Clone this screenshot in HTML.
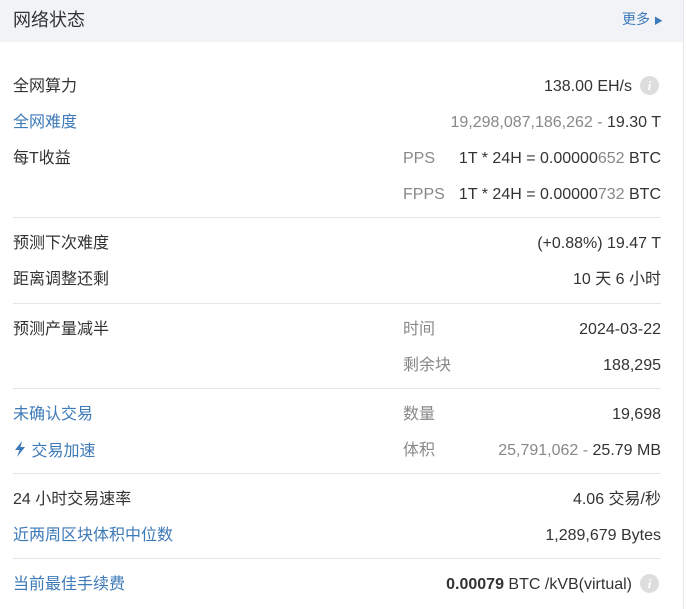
<!DOCTYPE html>
<html><head><meta charset="utf-8"><style>
*{margin:0;padding:0;box-sizing:border-box}
body{width:687px;height:609px;background:#fff;font-family:"Liberation Sans","Noto Sans CJK SC",sans-serif;font-size:16px;color:#333;position:relative;overflow:hidden}
.hdr{position:absolute;left:0;top:0;width:684px;height:42px;background:#f1f3f6}
.rb{position:absolute;left:683px;top:0;width:1px;height:609px;background:#e8e8e8}
.t{position:absolute;white-space:nowrap;line-height:20px;margin-top:2px}
.r{right:26px;text-align:right}
.b{color:#3d7ab8}
.g{color:#888}
.hr{position:absolute;left:13px;width:648px;height:1px;background:#e6e6e6}
.i{position:absolute;width:19px;height:19px;border-radius:50%;background:#ddd;color:#fff;font:italic bold 13px/19px "Liberation Serif",serif;text-align:center}
</style></head><body>
<div class="hdr"></div><div class="rb"></div>
<div class="t" style="left:13px;top:7px;font-size:18px;line-height:22px">网络状态</div>
<div class="t b" style="left:622px;top:7px;font-size:14px">更多 <span style="font-size:9px">▶</span></div>

<div class="t" style="left:13px;top:75px">全网算力</div>
<div class="t" style="right:55px;top:75px">138.00 EH/s</div>
<div class="i" style="left:640px;top:76px">i</div>

<div class="t b" style="left:13px;top:111px">全网难度</div>
<div class="t r" style="top:111px"><span class="g">19,298,087,186,262 - </span>19.30 T</div>

<div class="t" style="left:13px;top:147px">每T收益</div>
<div class="t g" style="left:403px;top:147px">PPS</div>
<div class="t r" style="top:147px">1T * 24H = 0.00000<span class="g">652</span> BTC</div>
<div class="t g" style="left:403px;top:183px">FPPS</div>
<div class="t r" style="top:183px">1T * 24H = 0.00000<span class="g">732</span> BTC</div>
<div class="hr" style="top:217px"></div>

<div class="t" style="left:13px;top:232px">预测下次难度</div>
<div class="t r" style="top:232px">(+0.88%) 19.47 T</div>
<div class="t" style="left:13px;top:268px">距离调整还剩</div>
<div class="t r" style="top:268px">10 天 6 小时</div>
<div class="hr" style="top:303px"></div>

<div class="t" style="left:13px;top:318px">预测产量减半</div>
<div class="t g" style="left:403px;top:318px">时间</div>
<div class="t r" style="top:318px">2024-03-22</div>
<div class="t g" style="left:403px;top:354px">剩余块</div>
<div class="t r" style="top:354px">188,295</div>
<div class="hr" style="top:388px"></div>

<div class="t b" style="left:13px;top:403px">未确认交易</div>
<div class="t g" style="left:403px;top:403px">数量</div>
<div class="t r" style="top:403px">19,698</div>
<div class="t b" style="left:13px;top:439px"><svg width="14" height="16" viewBox="0 0 14 16" style="vertical-align:-1px"><path d="M9 0L2 9h4.5l-2.5 7 8-10H7.5z" fill="#3d7ab8"/></svg> 交易加速</div>
<div class="t g" style="left:403px;top:439px">体积</div>
<div class="t r" style="top:439px"><span class="g">25,791,062 - </span>25.79 MB</div>
<div class="hr" style="top:473px"></div>

<div class="t" style="left:13px;top:488px">24 小时交易速率</div>
<div class="t r" style="top:488px">4.06 交易/秒</div>
<div class="t b" style="left:13px;top:524px">近两周区块体积中位数</div>
<div class="t r" style="top:524px">1,289,679 Bytes</div>
<div class="hr" style="top:558px"></div>

<div class="t b" style="left:13px;top:573px">当前最佳手续费</div>
<div class="t" style="right:55px;top:573px"><b>0.00079</b> BTC /kVB(virtual)</div>
<div class="i" style="left:640px;top:574px">i</div>
</body></html>
